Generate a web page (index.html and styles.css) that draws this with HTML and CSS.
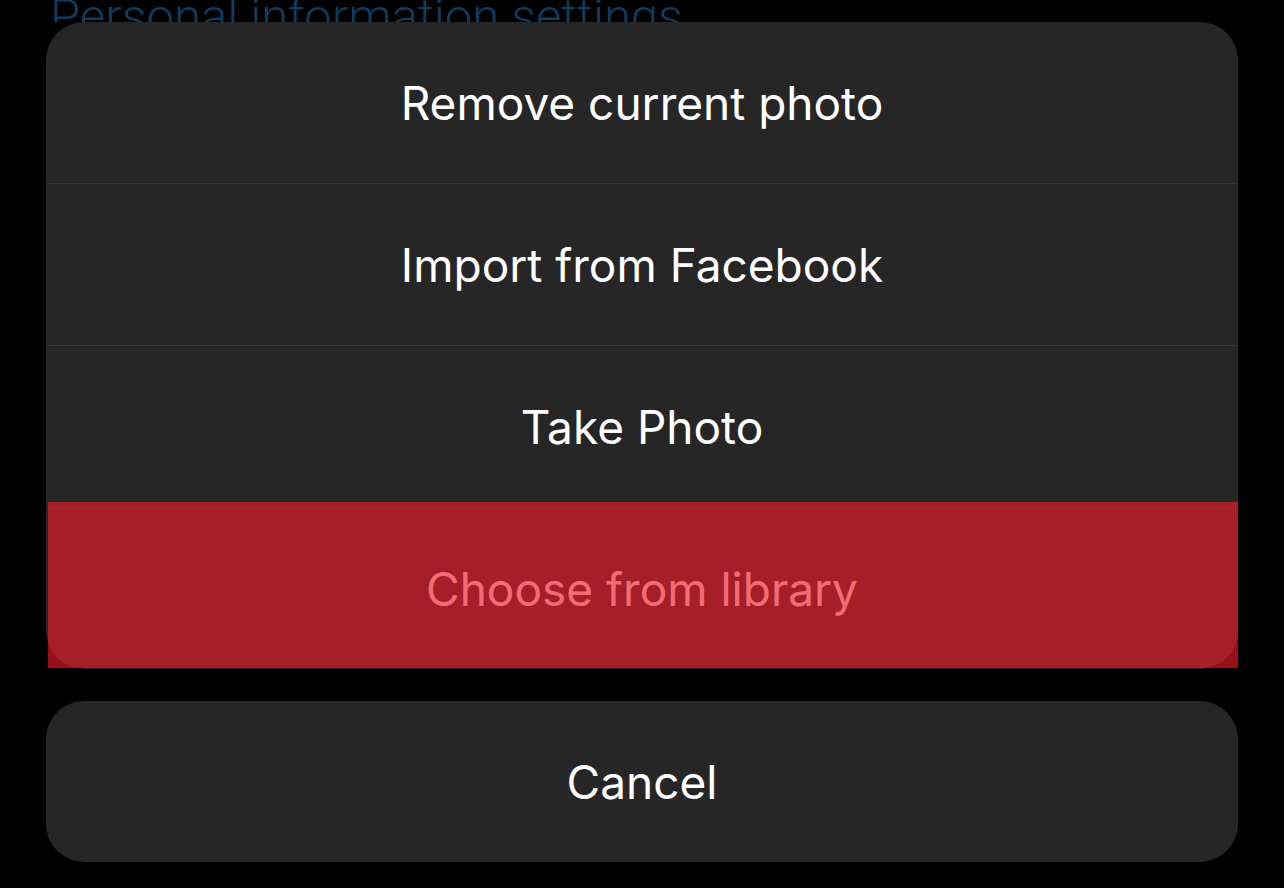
FILE: index.html
```html
<!DOCTYPE html>
<html lang="en">
<head>
<meta charset="utf-8">
<title>Photo actions</title>
<link rel="stylesheet" href="styles.css">
</head>
<body>
<div class="screen">
  <div class="bg-title"><span class="bg-title-text">Personal information settings</span></div>
  <div class="sheet">
    <div class="group">
      <div class="action">Remove current photo</div>
      <div class="action">Import from Facebook</div>
      <div class="action">Take Photo</div>
      <div class="action pressed">Choose from library</div>
      <div class="press-overlay"></div>
    </div>
    <div class="group cancel-group">
      <div class="action cancel">Cancel</div>
    </div>
  </div>
</div>
</body>
</html>
```

FILE: styles.css
```css
html, body {
  margin: 0;
  padding: 0;
  background: #000;
}

.screen {
  width: 1284px;
  height: 888px;
  box-sizing: border-box;
  padding: 0 46px;
  overflow: hidden;
}

.bg-title {
  height: 22px;
  overflow: hidden;
  padding-left: 4px;
}

.bg-title-text {
  display: block;
  margin-top: -8px;
  font-family: Roboto, "Noto Sans", sans-serif;
  font-weight: 300;
  font-size: 49px;
  line-height: 49px;
  color: #0e3d62;
  white-space: nowrap;
}

.sheet {
  display: flex;
  flex-direction: column;
  gap: 32px;
}

.group {
  position: relative;
  background: #262626;
  border-radius: 38px;
}

.action {
  height: 161px;
  display: flex;
  align-items: center;
  justify-content: center;
  font-family: Inter, "Noto Sans", sans-serif;
  font-size: 46px;
  font-weight: 400;
  color: #fff;
  letter-spacing: 0;
}

.action + .action {
  border-top: 1px solid #363636;
}

.action.pressed {
  color: #e6e6e6;
}

.press-overlay {
  position: absolute;
  left: 2px;
  right: 0;
  top: 480px;
  height: 166px;
  background: rgba(251, 25, 40, 0.6);
}
```
